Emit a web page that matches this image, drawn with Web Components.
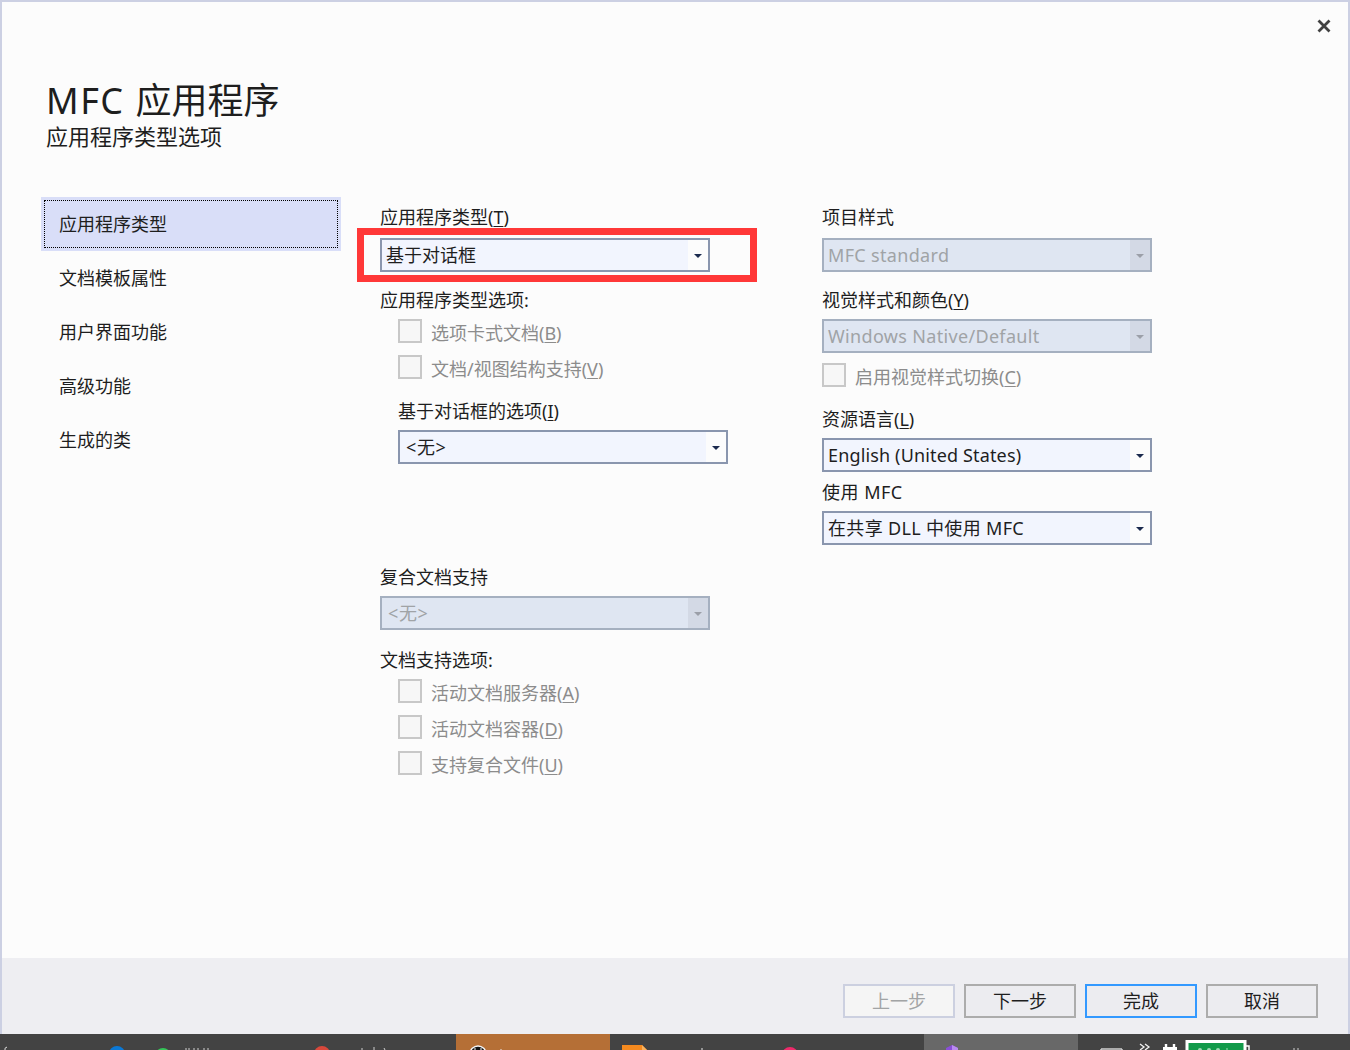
<!DOCTYPE html>
<html lang="zh-CN">
<head>
<meta charset="utf-8">
<title>MFC 应用程序</title>
<style>
  html, body { margin: 0; padding: 0; }
  body {
    width: 1350px; height: 1050px; overflow: hidden;
    font: 18px/26px "Noto Sans", "Noto Sans CJK SC", sans-serif;
    color: #1e1e1e;
    display: flex; flex-direction: column;
  }
  mfc-window { flex: 1 1 auto; min-height: 0; }
  u { text-underline-offset: 2px; text-decoration-thickness: 1px; }
  .lat { letter-spacing: 1.5px; }
  .wide { letter-spacing: .33px; }
  .en { letter-spacing: .15px; }
  .use { letter-spacing: .5px; }
  .none { letter-spacing: .6px; }
  .none-in { padding-left: 2px; }
  .g5 { margin-top: 5px; }
  .g7 { margin-top: 7px; }
  .g8 { margin-top: 8px; }
  .g10 { margin-top: 10px; }
  .g12 { margin-top: 12px; }
  .g16 { margin-top: 16px; }
  .g18 { margin-top: 18px; }
  .g20 { margin-top: 20px; }
  .g101 { margin-top: 101px; }
  .in { margin-left: 18px; }
</style>
</head>
<body>

<mfc-window>
  <span slot="title"><span class="lat">MFC </span>应用程序</span>
  <span slot="subtitle">应用程序类型选项</span>

  <mfc-nav slot="nav">
    <mfc-nav-item selected>应用程序类型</mfc-nav-item>
    <mfc-nav-item>文档模板属性</mfc-nav-item>
    <mfc-nav-item>用户界面功能</mfc-nav-item>
    <mfc-nav-item>高级功能</mfc-nav-item>
    <mfc-nav-item>生成的类</mfc-nav-item>
  </mfc-nav>

  <mfc-column slot="left">
    <mfc-label>应用程序类型(<u>T</u>)</mfc-label>
    <mfc-combo class="g7" highlight>基于对话框</mfc-combo>
    <mfc-label class="g16">应用程序类型选项:</mfc-label>
    <mfc-check class="g5 in">选项卡式文档(<u>B</u>)</mfc-check>
    <mfc-check class="g12 in">文档/视图结构支持(<u>V</u>)</mfc-check>
    <mfc-label class="g20 in">基于对话框的选项(<u>I</u>)</mfc-label>
    <mfc-combo class="g5 in"><span class="none none-in">&lt;无&gt;</span></mfc-combo>
    <mfc-label class="g101">复合文档支持</mfc-label>
    <mfc-combo class="g5" disabled><span class="none none-in">&lt;无&gt;</span></mfc-combo>
    <mfc-label class="g18">文档支持选项:</mfc-label>
    <mfc-check class="g5 in">活动文档服务器(<u>A</u>)</mfc-check>
    <mfc-check class="g12 in">活动文档容器(<u>D</u>)</mfc-check>
    <mfc-check class="g12 in">支持复合文件(<u>U</u>)</mfc-check>
  </mfc-column>

  <mfc-column slot="right">
    <mfc-label>项目样式</mfc-label>
    <mfc-combo class="g7" disabled><span class="wide">MFC standard</span></mfc-combo>
    <mfc-label class="g16">视觉样式和颜色(<u>Y</u>)</mfc-label>
    <mfc-combo class="g5" disabled><span class="wide">Windows Native/Default</span></mfc-combo>
    <mfc-check class="g10">启用视觉样式切换(<u>C</u>)</mfc-check>
    <mfc-label class="g20">资源语言(<u>L</u>)</mfc-label>
    <mfc-combo class="g5"><span class="en">English (United States)</span></mfc-combo>
    <mfc-label class="g8"><span class="use">使用 MFC</span></mfc-label>
    <mfc-combo class="g5"><span class="wide">在共享 DLL 中使用 MFC</span></mfc-combo>
  </mfc-column>

  <mfc-button slot="footer" disabled>上一步</mfc-button>
  <mfc-button slot="footer">下一步</mfc-button>
  <mfc-button slot="footer" primary>完成</mfc-button>
  <mfc-button slot="footer">取消</mfc-button>
</mfc-window>

<mfc-taskbar></mfc-taskbar>

<script>
function define(name, css, html) {
  customElements.define(name, class extends HTMLElement {
    constructor() {
      super();
      const root = this.attachShadow({ mode: 'open' });
      root.innerHTML = '<style>' + css + '</style>' + html;
    }
  });
}

define('mfc-window', `
  :host { display: flex; flex-direction: column; box-sizing: border-box;
          border: solid #ccd0e3; border-width: 2px 2px 0 2px; background: #fcfcfc; }
  .main { flex: 1 1 auto; min-height: 0; display: flex; flex-direction: column; }
  .close-row { height: 76px; display: flex; justify-content: flex-end; align-items: flex-start;
               padding: 17px 17px 0 0; box-sizing: border-box; }
  .close-row svg { display: block; }
  header { padding-left: 44px; }
  .title { font-size: 36px; height: 44px; line-height: 46px; color: #1e1e1e; }
  .subtitle { font-size: 22px; height: 30px; line-height: 28px; color: #1e1e1e; }
  .body { display: flex; padding: 45px 0 0 39px; }
  .nav { width: 300px; margin-right: 39px; }
  .col { width: 330px; padding-top: 8px; }
  .col + .col { margin-left: 112px; }
  footer { flex: 0 0 76px; box-sizing: border-box; background: #eeeef2;
           display: flex; justify-content: flex-end; gap: 9px; padding: 26px 30px 0 0; }
`, `
  <div class="main">
    <div class="close-row">
      <svg width="14" height="14" viewBox="0 0 14 14" aria-label="close">
        <path d="M1.5 1.5 L12.5 12.5 M12.5 1.5 L1.5 12.5" stroke="#424242" stroke-width="2.8" fill="none"/>
      </svg>
    </div>
    <header>
      <div class="title"><slot name="title"></slot></div>
      <div class="subtitle"><slot name="subtitle"></slot></div>
    </header>
    <div class="body">
      <div class="nav"><slot name="nav"></slot></div>
      <div class="col"><slot name="left"></slot></div>
      <div class="col"><slot name="right"></slot></div>
    </div>
  </div>
  <footer><slot name="footer"></slot></footer>
`);

define('mfc-nav', `:host { display: block; }`, `<slot></slot>`);

define('mfc-nav-item', `
  :host { display: block; height: 54px; box-sizing: border-box; padding: 3px; }
  .in { height: 48px; box-sizing: border-box; border: 1px solid transparent; padding-left: 14px;
        display: flex; align-items: center; }
  :host([selected]) { background: #d9def8; }
  :host([selected]) .in { border: 1px dotted #000; }
`, `<div class="in"><span><slot></slot></span></div>`);

define('mfc-column', `:host { display: block; width: 330px; }`, `<slot></slot>`);

define('mfc-label', `:host { display: block; height: 26px; line-height: 24px; white-space: nowrap; }`, `<slot></slot>`);

define('mfc-combo', `
  :host { display: block; position: relative; width: 330px; height: 34px; box-sizing: border-box;
          border: 2px solid #8a96ae; background: #f2f5fe; }
  .row { display: flex; height: 30px; }
  .text { flex: 1; padding-left: 4px; line-height: 30px; white-space: nowrap; overflow: hidden; }
  .btn { flex: 0 0 20px; background: #fcfcfc; display: flex; align-items: center; justify-content: center; }
  .tri { width: 0; height: 0; border: 4px solid transparent; border-top: 4px solid #1b2a4e; border-bottom: 0; margin-top: 1px; }
  :host([disabled]) { border-color: #a5b0c0; background: #dfe6f2; color: #a0a3a6; }
  :host([disabled]) .btn { background: #d3d9e5; }
  :host([disabled]) .tri { border-top-color: #9b9fa8; }
  .mark { display: none; position: absolute; left: -25px; top: -12px; width: 400px; height: 54px;
          box-sizing: border-box; border: 7px solid #ff3838; pointer-events: none; }
  :host([highlight]) .mark { display: block; }
`, `
  <div class="row"><div class="text"><slot></slot></div><div class="btn"><div class="tri"></div></div></div>
  <div class="mark"></div>
`);

define('mfc-check', `
  :host { display: flex; align-items: flex-start; height: 24px; white-space: nowrap; color: #8c8c8c; gap: 9px; }
  .box { flex: 0 0 24px; height: 24px; box-sizing: border-box; border: 2px solid #c8c8c8; background: #f7f7f7; }
  span { display: block; height: 26px; line-height: 26px; margin-top: 1px; }
`, `<div class="box"></div><span><slot></slot></span>`);

define('mfc-button', `
  :host { display: flex; align-items: center; justify-content: center; width: 112px; height: 34px;
          box-sizing: border-box; border: 2px solid #acacac; background: #ececf0; color: #1e1e1e; }
  :host([primary]) { border-color: #3399ff; }
  :host([disabled]) { border-color: #ccd0e0; background: #f5f5f5; color: #a2a4a5; }
`, `<slot></slot>`);

define('mfc-taskbar', `
  :host { display: flex; flex: 0 0 16px; height: 16px; overflow: hidden; background: #434343; }
  svg { display: block; height: 16px; }
  .seg { height: 16px; flex: 0 0 auto; }
  .orange { background: #b56f36; }
  .gray { background: #686868; }
`, `
  <div class="seg" style="width:456px"><svg width="456" height="16">
    <path d="M5 16 Q4 14 7 13" stroke="#ddd" fill="none"/>
    <circle cx="117" cy="20" r="8" fill="#0a78d6"/>
    <circle cx="163" cy="22" r="8" fill="#35c759"/>
    <path d="M186 14v2M189 14v2M194 14v2M198 14v2M204 14v2M208 14v2" stroke="#cfcfcf"/>
    <circle cx="322" cy="20" r="8" fill="#d9483b"/>
    <path d="M362 14v2M374 13v3M384 14l1 2" stroke="#cfcfcf"/>
  </svg></div>
  <div class="seg orange" style="width:154px"><svg width="154" height="16">
    <circle cx="22" cy="20" r="8" fill="#141414" stroke="#f4f4f4" stroke-width="1.5"/>
    <path d="M19 16v-2M25 16v-2" stroke="#f4f4f4"/>
    <path d="M45 15v1" stroke="#e8e8e8"/>
  </svg></div>
  <div class="seg" style="width:314px"><svg width="314" height="16">
    <path d="M12 11H32L37 16H12Z" fill="#f58a1f"/>
    <path d="M32 11L37 16H32Z" fill="#f9b25f"/>
    <path d="M92 14v2" stroke="#e8e8e8"/>
    <circle cx="180" cy="21" r="8" fill="#ee2a6b"/>
  </svg></div>
  <div class="seg gray" style="width:154px"><svg width="154" height="16">
    <path d="M28 11L22 14V16H34V14Z" fill="#8a4fd8"/>
    <path d="M28 11L34 14V16H28Z" fill="#b98af0"/>
  </svg></div>
  <div class="seg" style="flex:1"><svg width="272" height="16">
    <path d="M23 15H44M23 15V16M44 15V16" stroke="#cfcfcf" fill="none" stroke-width="1.5"/>
    <path d="M62 10L66 13L62 16M67 10L71 13L67 16" stroke="#f2f2f2" fill="none" stroke-width="1.3"/>
    <path d="M88 16V10M96 16V10" stroke="#fff" stroke-width="2.4"/>
    <path d="M85 16V13H99V16Z" fill="#fff"/>
    <path d="M109 16V7.5H167V16" fill="#129a4a" stroke="#fff" stroke-width="3"/>
    <path d="M168 12H171V16" fill="none" stroke="#fff" stroke-width="1.5"/>
    <circle cx="122" cy="16" r="2" fill="#9fd8b4"/><circle cx="131" cy="16" r="2" fill="#9fd8b4"/>
    <circle cx="140" cy="16" r="2" fill="#9fd8b4"/><path d="M149 14V16" stroke="#9fd8b4"/>
    <path d="M216 14V16M220 14V16" stroke="#cfcfcf"/>
  </svg></div>
`);
</script>
</body>
</html>
